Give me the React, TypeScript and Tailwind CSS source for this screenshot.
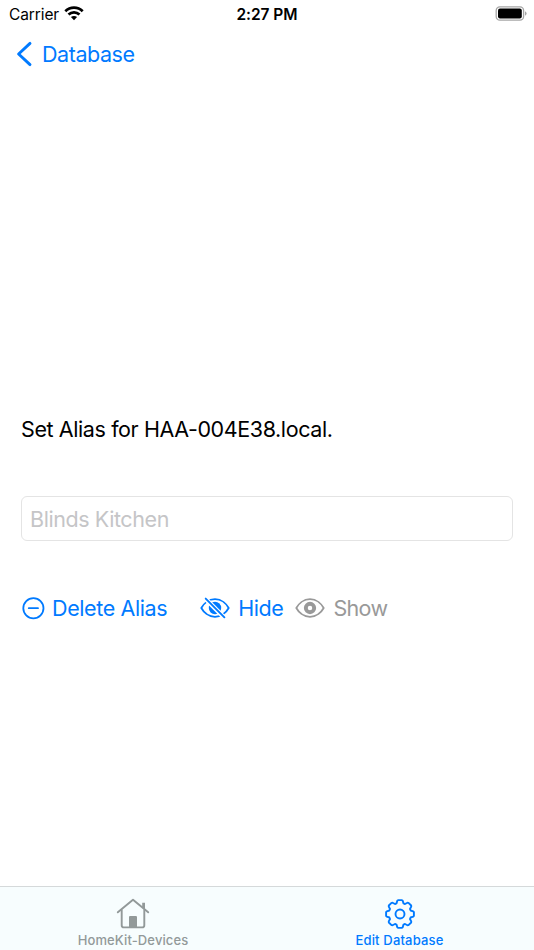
import React from 'react';

const TEETH = 8;

// outline of the settings gear, centred on 0,0
const gearPath = () => {
  const tooth = [
    [-3.5, -10.6],
    [-2.7, -13.2],
    [-1.9, -13.9],
    [1.9, -13.9],
    [2.7, -13.2],
    [3.5, -10.6],
  ];
  const points: string[] = [];
  for (let i = 0; i < TEETH; i++) {
    const a = (i * 2 * Math.PI) / TEETH;
    tooth.forEach(([x, y]) => {
      const px = x * Math.cos(a) - y * Math.sin(a);
      const py = x * Math.sin(a) + y * Math.cos(a);
      points.push(`${px.toFixed(2)} ${py.toFixed(2)}`);
    });
  }
  return `M${points.join('L')}Z`;
};

const WifiIcon = () => (
  <svg className="mb-[2px]" width="20" height="15" viewBox="0 0 20 15" fill="none" stroke="#000" strokeWidth="2.7">
    <path d="M1.3 5.2C6.2.5 13.8.5 18.7 5.2" />
    <path d="M4.5 8.6C7.6 5.7 12.4 5.7 15.5 8.6" />
    <path d="M10 14.2 6.9 11.1C8.7 9.5 11.3 9.5 13.1 11.1Z" fill="#000" stroke="none" />
  </svg>
);

const BatteryIcon = () => (
  <svg width="32" height="16" viewBox="0 0 32 16">
    <rect x="1.2" y="0.8" width="27.4" height="13.4" rx="3.6" fill="none" stroke="#a6a6a6" strokeWidth="1.3" />
    <rect x="3" y="2.6" width="23.8" height="9.8" rx="2" fill="#000" />
    <path d="M30 5.2Q31.6 6 31.6 7.5T30 9.8Z" fill="#a6a6a6" />
  </svg>
);

const MinusCircleIcon = () => (
  <svg width="24" height="24" viewBox="0 0 24 24" fill="none" stroke="currentColor" strokeWidth="1.8">
    <circle cx="12.4" cy="12.2" r="10.1" />
    <path d="M7.8 12.2H17" strokeLinecap="round" />
  </svg>
);

const EyeIcon = () => (
  <svg width="30" height="22" viewBox="0 0 30 22" fill="none" stroke="currentColor">
    <path d="M1.3 11C3.4 7.2 8.3 2.2 15 2.2S26.6 7.2 28.7 11C26.6 14.8 21.7 19.8 15 19.8S3.4 14.8 1.3 11Z" strokeWidth="1.8" strokeLinejoin="round" />
    <circle cx="15" cy="11" r="4.2" strokeWidth="3.9" />
  </svg>
);

const EyeSlashIcon = () => (
  <svg width="30" height="22" viewBox="0 0 30 22" fill="none" stroke="currentColor">
    <path d="M1.3 11C3.4 7.2 8.3 2.2 15 2.2S26.6 7.2 28.7 11C26.6 14.8 21.7 19.8 15 19.8S3.4 14.8 1.3 11Z" strokeWidth="1.8" strokeLinejoin="round" />
    <circle cx="15" cy="11" r="6.2" fill="currentColor" stroke="none" />
    <path d="M4.9 1.2 24.5 20.8" stroke="#fff" strokeWidth="4.6" />
    <path d="M5.7 1.6 24.4 20.3" strokeWidth="1.9" strokeLinecap="round" />
  </svg>
);

const HouseIcon = () => (
  <svg width="34" height="32" viewBox="0 0 34 32" fill="none" stroke="currentColor">
    <path d="M1.8 14.3 17 1.8 32.2 14.3" strokeWidth="1.9" strokeLinecap="round" strokeLinejoin="round" />
    <path d="M5.7 11.5V27.2Q5.7 29.4 7.9 29.4H26.1Q28.3 29.4 28.3 27.2V11.5" strokeWidth="1.9" />
    <path d="M26.2 4.8H29V11.5L26.2 9.2Z" fill="currentColor" stroke="none" />
    <path d="M13 29V19Q13 17.9 14.1 17.9H19.9Q21 17.9 21 19V29Z" fill="currentColor" stroke="none" />
  </svg>
);

const GearIcon = () => (
  <svg width="32" height="32" viewBox="-16 -16 32 32" fill="none" stroke="currentColor" strokeWidth="1.9" strokeLinejoin="round">
    <path d={gearPath()} />
    <circle r="4.5" />
  </svg>
);

const StatusBar = () => (
  <div className="grid h-7 grid-cols-3 items-center text-[15.5px] text-black">
    <div className="flex items-center gap-[5px] pl-[9px]">
      <span className="pt-px tracking-[-0.1px]">Carrier</span>
      <WifiIcon />
    </div>
    <div className="pt-px text-center font-semibold tracking-[-0.05px]">2:27 PM</div>
    <div className="flex justify-end pr-[7px]">
      <BatteryIcon />
    </div>
  </div>
);

const App: React.FC = () => {
  return (
    <div className="flex h-[950px] w-[534px] flex-col overflow-hidden bg-white font-['Inter',sans-serif]">
      <StatusBar />

      <header className="flex h-[54px] items-center pb-[2px] pl-4 text-[#007aff]">
        <button className="flex items-center gap-[9px]">
          <svg width="17" height="26" viewBox="0 0 17 26" fill="none" stroke="currentColor" strokeWidth="2.9" strokeLinecap="round" strokeLinejoin="round">
            <path d="M14 2.4 2.6 13 14 23.6" />
          </svg>
          <span className="text-[21.5px] leading-7 tracking-[-0.45px]">Database</span>
        </button>
      </header>

      <main className="flex flex-1 flex-col px-[21px] pt-[333px]">
        <p className="text-[21.5px] leading-7 tracking-[-0.4px] text-black">
          Set Alias for HAA-004E38.local.
        </p>

        <input
          type="text"
          placeholder="Blinds Kitchen"
          className="mt-[53px] h-[45px] w-full rounded-md border border-[#e4e4e4] bg-white px-2 pt-px text-[21.5px] tracking-[-0.42px] outline-none placeholder:text-[#c5c5c7]"
        />

        <div className="mt-[53px] flex h-7 items-center text-[21.5px] leading-7">
          <button className="flex items-center gap-[7px] tracking-[-0.39px] text-[#007aff]">
            <MinusCircleIcon />
            <span>Delete Alias</span>
          </button>
          <button className="ml-[33px] flex items-center gap-2 tracking-[-0.4px] text-[#007aff]">
            <EyeSlashIcon />
            <span>Hide</span>
          </button>
          <button className="ml-3 flex items-center gap-2 tracking-[-0.7px] text-[#999]" disabled>
            <EyeIcon />
            <span>Show</span>
          </button>
        </div>
      </main>

      <nav className="grid h-16 grid-cols-2 border-t border-[#d5d9da] bg-[#f7fdfe] text-[13px] font-medium leading-4">
        <button className="flex flex-col items-center pr-px pt-[11px] text-[#929999]">
          <HouseIcon />
          <span className="mt-[2px] tracking-[0.12px]">HomeKit-Devices</span>
        </button>
        <button className="flex flex-col items-center pr-[2px] pt-[11px] text-[#007aff]">
          <GearIcon />
          <span className="mt-[2px] tracking-[0.18px]">Edit Database</span>
        </button>
      </nav>
    </div>
  );
};

export default App;
